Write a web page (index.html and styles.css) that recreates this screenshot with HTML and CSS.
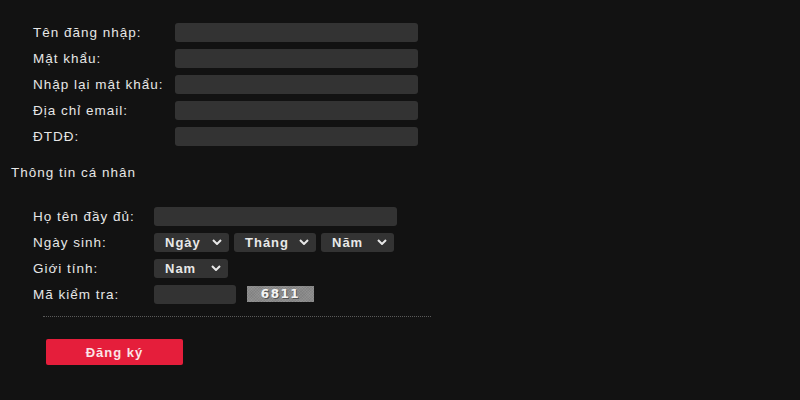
FILE: index.html
```html
<!DOCTYPE html>
<html lang="vi">
<head>
<meta charset="utf-8">
<link rel="stylesheet" href="styles.css">
</head>
<body>
<div class="page">
  <div class="section account">
    <div class="row"><label class="lbl">Tên đăng nhập:</label><div class="input wide"></div></div>
    <div class="row"><label class="lbl">Mật khẩu:</label><div class="input wide"></div></div>
    <div class="row"><label class="lbl">Nhập lại mật khẩu:</label><div class="input wide"></div></div>
    <div class="row"><label class="lbl">Địa chỉ email:</label><div class="input wide"></div></div>
    <div class="row"><label class="lbl">ĐTDĐ:</label><div class="input wide"></div></div>
  </div>
  <div class="heading">Thông tin cá nhân</div>
  <div class="section personal">
    <div class="row"><label class="lbl">Họ tên đầy đủ:</label><div class="input wide"></div></div>
    <div class="row"><label class="lbl">Ngày sinh:</label>
      <div class="selects">
        <div class="select s-day"><span>Ngày</span><svg class="chev" viewBox="0 0 10 6"><path d="M1 1 L5 5 L9 1"/></svg></div>
        <div class="select s-month"><span>Tháng</span><svg class="chev" viewBox="0 0 10 6"><path d="M1 1 L5 5 L9 1"/></svg></div>
        <div class="select s-year"><span>Năm</span><svg class="chev" viewBox="0 0 10 6"><path d="M1 1 L5 5 L9 1"/></svg></div>
      </div>
    </div>
    <div class="row"><label class="lbl">Giới tính:</label>
      <div class="select s-gender"><span>Nam</span><svg class="chev" viewBox="0 0 10 6"><path d="M1 1 L5 5 L9 1"/></svg></div>
    </div>
    <div class="row"><label class="lbl">Mã kiểm tra:</label>
      <div class="input captcha-input"></div>
      <div class="captcha">6811</div>
    </div>
  </div>
  <div class="divider"></div>
  <div class="actions"><button class="submit">Đăng ký</button></div>
</div>
</body>
</html>
```
FILE: styles.css
```css
html, body {
  margin: 0;
  padding: 0;
  background: #121212;
}
body {
  width: 800px;
  height: 400px;
  overflow: hidden;
  font-family: "Liberation Sans", Arial, sans-serif;
  font-size: 13.5px;
  letter-spacing: 1px;
  color: #e6e6e6;
}
.page {
  padding-top: 22px;
}
.section {
  display: flex;
  flex-direction: column;
  gap: 6px;
  padding-left: 33px;
}
.row {
  display: flex;
  align-items: center;
  height: 20px;
}
.account .lbl { width: 142px; }
.personal .lbl { width: 121px; }
.lbl {
  flex: none;
  white-space: nowrap;
}
.input {
  background: #333333;
  border-radius: 3px;
  height: 19px;
}
.wide { width: 243px; }
.heading {
  padding-left: 11px;
  margin-top: 19px;
  height: 16px;
  line-height: 16px;
  margin-bottom: 25px;
}
.selects {
  display: flex;
  gap: 5px;
}
.select {
  display: flex;
  align-items: center;
  justify-content: space-between;
  background: #333333;
  border-radius: 3px;
  height: 19px;
  padding: 0 7px 0 11px;
  box-sizing: border-box;
  font-weight: bold;
  font-size: 13px;
  letter-spacing: 1px;
  color: #e8e8e8;
}
.s-day { width: 75px; }
.s-month { width: 82px; }
.s-year { width: 73px; }
.s-gender { width: 74px; }
.chev {
  width: 10px;
  height: 6px;
  fill: none;
  stroke: #e8e8e8;
  stroke-width: 2;
}
.captcha-input {
  width: 82px;
}
.captcha {
  margin-left: 11px;
  width: 67px;
  height: 16px;
  line-height: 16px;
  text-align: center;
  background-color: #8a8a8a;
  background-image:
    repeating-linear-gradient(45deg, rgba(255,255,255,0.06) 0 1px, transparent 1px 2px),
    repeating-linear-gradient(-45deg, rgba(0,0,0,0.06) 0 1px, transparent 1px 2px);
  font-family: "DejaVu Sans", sans-serif;
  font-weight: bold;
  font-size: 12px;
  letter-spacing: 1.5px;
  color: #f4f4f4;
  text-shadow: 1px 1px 0 #555;
}
.divider {
  margin: 12px 0 0 43px;
  width: 388px;
  border-top: 1px dotted #5a5a5a;
}
.actions {
  padding: 22px 0 0 46px;
}
.submit {
  width: 137px;
  height: 26px;
  border: none;
  border-radius: 2px;
  background: #e51e3b;
  color: #fbe4e7;
  font-family: "Liberation Sans", Arial, sans-serif;
  font-weight: bold;
  font-size: 13px;
  letter-spacing: 1px;
  padding: 0;
}
```
